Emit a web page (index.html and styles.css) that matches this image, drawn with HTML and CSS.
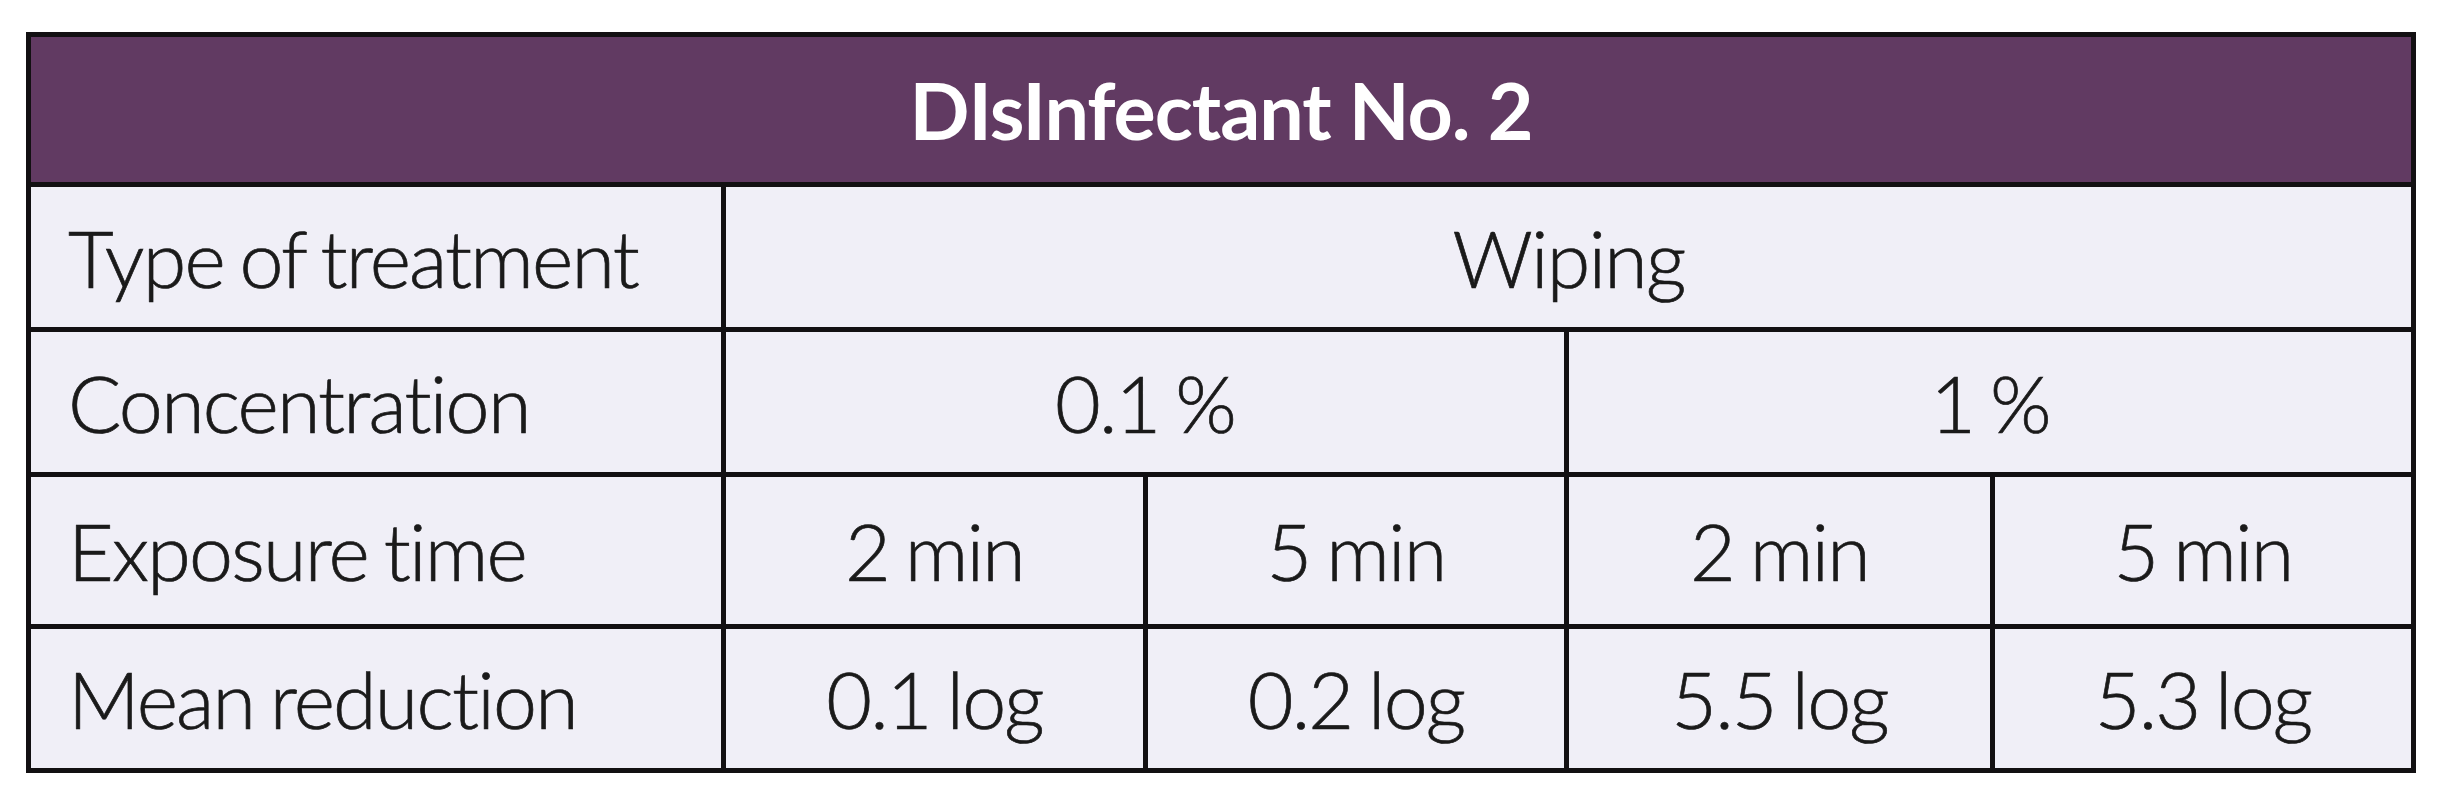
FILE: index.html
```html
<!DOCTYPE html>
<html lang="en">
<head>
<meta charset="utf-8">
<title>Disinfectant No. 2</title>
<link rel="stylesheet" href="styles.css">
</head>
<body>
<div class="sheet">
  <div class="results">
    <div class="cell title span-all">DIsInfectant No. 2</div>

    <div class="cell label">Type of treatment</div>
    <div class="cell span-4">Wiping</div>

    <div class="cell label">Concentration</div>
    <div class="cell span-2">0.1 %</div>
    <div class="cell span-2">1 %</div>

    <div class="cell label">Exposure time</div>
    <div class="cell">2 min</div>
    <div class="cell">5 min</div>
    <div class="cell">2 min</div>
    <div class="cell">5 min</div>

    <div class="cell label">Mean reduction</div>
    <div class="cell">0.1 log</div>
    <div class="cell">0.2 log</div>
    <div class="cell">5.5 log</div>
    <div class="cell">5.3 log</div>
  </div>
</div>
</body>
</html>
```

FILE: styles.css
```css
* {
  box-sizing: border-box;
}

html, body {
  margin: 0;
  padding: 0;
  background: #ffffff;
}

.sheet {
  padding: 32px 0 0 26px;
}

.results {
  display: grid;
  grid-template-columns: 695px 422px 421px 426px 421px;
  grid-template-rows: 150px 145px 145px 152px 144px;
  width: max-content;
  border-top: 5px solid #121012;
  border-left: 5px solid #121012;
  font-family: "Lato", "Liberation Sans", sans-serif;
  font-weight: 300;
  font-size: 79px;
  line-height: 1;
  letter-spacing: -1.8px;
  word-spacing: -4px;
  font-variant-ligatures: none;
  color: #1a1a1a;
  -webkit-text-stroke: 0.7px #1a1a1a;
}

.cell {
  display: flex;
  align-items: center;
  justify-content: center;
  background: #f0eff7;
  border-right: 5px solid #121012;
  border-bottom: 5px solid #121012;
  white-space: nowrap;
}

.label {
  justify-content: flex-start;
  padding-left: 37px;
}

.title {
  background: #613a62;
  color: #ffffff;
  font-weight: 700;
  letter-spacing: -1px;
  word-spacing: 0;
  -webkit-text-stroke: 0;
}

.span-all {
  grid-column: 1 / span 5;
}

.span-4 {
  grid-column: span 4;
}

.span-2 {
  grid-column: span 2;
}
```
